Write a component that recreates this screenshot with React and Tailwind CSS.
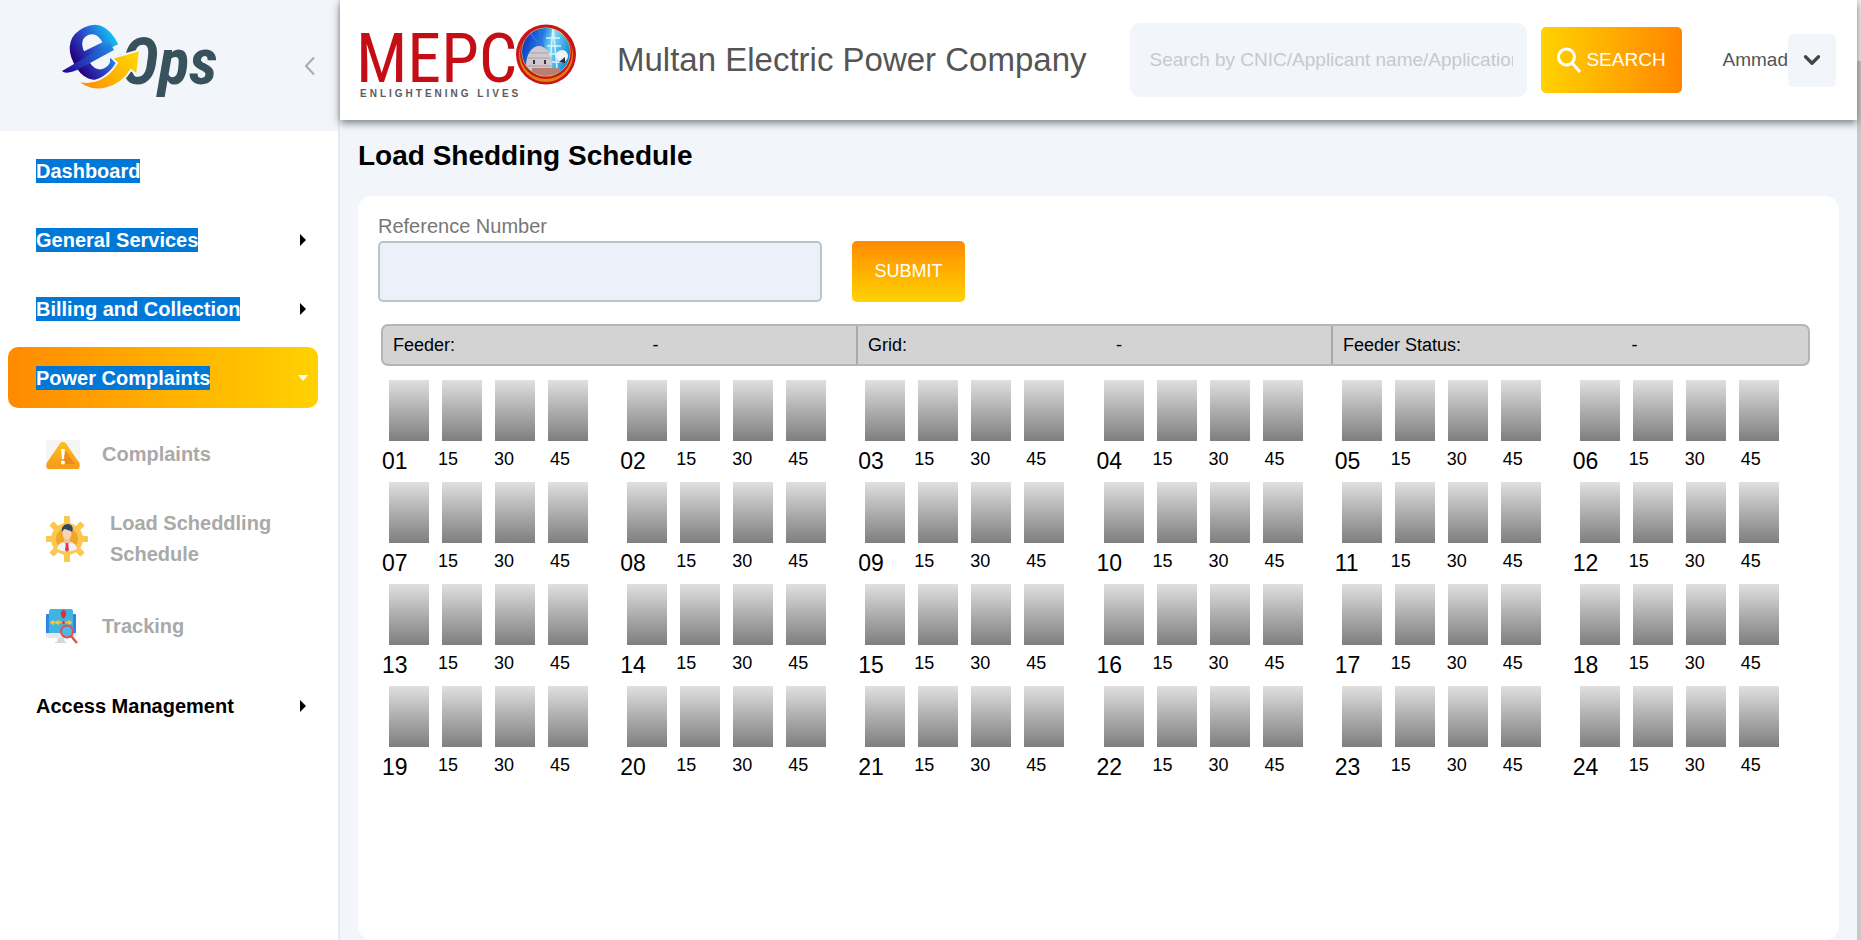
import { ChevronDown } from "lucide-react";

const HOURS = Array.from({ length: 24 }, (_, i) => String(i + 1).padStart(2, "0"));
const QUARTERS = ["15", "30", "45"];
const STATUS = ["Feeder:", "Grid:", "Feeder Status:"];

function EOpsLogo() {
  return (
    <svg width="166" height="86" viewBox="56 18 166 86" role="img" aria-label="eOps" className="shrink-0 overflow-visible">
      <defs>
        <linearGradient id="eBlue" x1="0" y1="0.6" x2="1" y2="0.4">
          <stop offset="0.1" stopColor="#25007f" />
          <stop offset="0.5" stopColor="#2b4fcf" />
          <stop offset="0.9" stopColor="#16bdf0" />
        </linearGradient>
        <linearGradient id="tail" gradientUnits="userSpaceOnUse" x1="62" y1="72" x2="110" y2="46">
          <stop offset="0" stopColor="#25009a" />
          <stop offset="1" stopColor="#1f86df" />
        </linearGradient>
        <linearGradient id="arrow" gradientUnits="userSpaceOnUse" x1="80" y1="88" x2="138" y2="54">
          <stop offset="0" stopColor="#ff8a00" />
          <stop offset="1" stopColor="#ffd800" />
        </linearGradient>
      </defs>
      <text x="121" y="84" fontSize="64" fontWeight="700" fontStyle="italic" fill="#37515d" fontFamily="'Roboto Condensed', Roboto, sans-serif">Ops</text>
      <text x="67" y="79" fontSize="100" fontWeight="700" fill="url(#eBlue)" transform="rotate(-26 95 52)" fontFamily="'Liberation Sans', sans-serif">e</text>
      <path d="M62 71 L110 43 L114 50 L77 70 Q65 75 62 71Z" fill="url(#tail)" />
      <path d="M76 80 C92 86 108 78 117 63 L112 58 L140 50 L137 75 L131 70 C120 88 94 98 76 80Z" fill="url(#arrow)" stroke="#f2f6fb" strokeWidth="2" />
    </svg>
  );
}

function MepcoLogo() {
  return (
    <svg width="218" height="80" viewBox="359 20 218 80" role="img" aria-label="MEPCO Enlightening Lives" className="shrink-0 overflow-visible">
      <defs>
        <linearGradient id="sky" x1="0" y1="0" x2="1" y2="0.3">
          <stop offset="0" stopColor="#0a17b4" />
          <stop offset="0.45" stopColor="#1c7fe0" />
          <stop offset="0.65" stopColor="#7fd6f5" />
          <stop offset="1" stopColor="#1590dc" />
        </linearGradient>
        <clipPath id="disc"><circle cx="546" cy="52" r="24" /></clipPath>
      </defs>
      <text x="356" y="82" fontSize="68" fill="#c40d14" fontFamily="'Roboto Condensed', 'Liberation Sans', sans-serif">MEPC</text>
      <circle cx="546" cy="54.500" r="31" fill="#fff" />
      <circle cx="546" cy="54.500" r="30" fill="#c8161a" />
      <circle cx="546" cy="55" r="27" fill="#e0820f" />
      <circle cx="546" cy="53" r="26" fill="#c8161a" />
      <circle cx="546" cy="52" r="24.500" fill="#f4d24a" />
      <g clipPath="url(#disc)">
        <rect x="520" y="26" width="52" height="52" fill="url(#sky)" />
        <path d="M528 30l20 26M538 26l8 30" stroke="#3d6be8" strokeWidth="1.500" />
        <path d="M553 26l-4 52M553 26l5 52M546 38h14M547 46h14M545 54h17M548 62h14" stroke="#d6f4ff" strokeWidth="1.500" fill="none" />
        <path d="M526 66c0-12 6-20 13-20s13 8 13 20v14h-26z" fill="#cfc8cc" />
        <path d="M528 58h22M530 53h18M527 66h24" stroke="#a9a0a8" />
        <path d="M534 60v4M545 60v4" stroke="#3a3340" strokeWidth="2" />
        <path d="M532 68h28v12h-28z" fill="#b97f72" />
        <circle cx="562" cy="56" r="6" fill="#eef4f8" />
        <path d="M559 62l6-5v6z" fill="#2c3138" />
      </g>
      <text x="360" y="97" fontSize="10" fontWeight="700" fill="#5b5b5d" letterSpacing="3" fontFamily="'Liberation Sans', sans-serif">ENLIGHTENING LIVES</text>
    </svg>
  );
}

function WarningIcon() {
  return (
    <svg width="34" height="30" viewBox="0 0 34 30" aria-hidden="true" className="shrink-0">
      <defs>
        <linearGradient id="warn" x1="0" y1="0" x2="0" y2="1">
          <stop offset="0" stopColor="#ffc21c" />
          <stop offset="1" stopColor="#f79a1b" />
        </linearGradient>
      </defs>
      <rect width="34" height="30" fill="#f5f5f5" />
      <path d="M14 4q3-4 6 0l13 20q2 5-3 5H4q-5 0-3-5z" fill="#f6a313" />
      <path d="M14 3.500q3-3.500 6 0l13 19q2 5-3 5H4q-5 0-3-5z" fill="url(#warn)" />
      <path d="M19 10l10 14h-9l-3-2z" fill="#e5761d" opacity="0.6" />
      <path d="M15 9h4l-1 10h-2z" fill="#fff" />
      <circle cx="17" cy="22.500" r="2" fill="#fff" />
    </svg>
  );
}

function GearPersonIcon() {
  return (
    <svg width="42" height="46" viewBox="0 0 42 46" aria-hidden="true" className="shrink-0">
      <g fill="#fdc64d">
        <rect x="18" y="0" width="6" height="46" rx="1" />
        <rect x="0" y="20" width="42" height="6" rx="1" />
        <rect x="18" y="1" width="6" height="44" rx="1" transform="rotate(45 21 23)" />
        <rect x="18" y="1" width="6" height="44" rx="1" transform="rotate(-45 21 23)" />
        <circle cx="21" cy="23" r="16" />
      </g>
      <circle cx="21" cy="23" r="11" fill="#f0a52b" />
      <path d="M11 33q1-6 7-7h6q6 1 7 7-10 5-20 0z" fill="#eef1fb" />
      <path d="M18 22h6v5l-3 3-3-3z" fill="#f2c09b" />
      <ellipse cx="21" cy="17.500" rx="4.500" ry="6" fill="#fbd3ae" />
      <path d="M16 16c-1-5 2-8 6-8 4 0 6 4 4 8-2-2-6-2-7-3-1 0-2 1-3 3z" fill="#2d4864" />
      <path d="M20 27h2l1 7-2 2-2-2z" fill="#e0354a" />
    </svg>
  );
}

function TrackingIcon() {
  return (
    <svg width="32" height="36" viewBox="0 0 32 36" aria-hidden="true" className="shrink-0">
      <rect x="0" y="6" width="30" height="20" rx="1" fill="#2d86e0" />
      <path d="M0 25h30v3q0 2-2 2H2q-2 0-2-2z" fill="#e6e7ea" />
      <path d="M12 30h6l1 4h2v1H9v-1h2z" fill="#d4d6da" />
      <path d="M5 1h20q2 0 2 3v21H3V4q0-3 2-3z" fill="#3fb4e4" />
      <path d="M5 14.500h21" stroke="#f6c945" strokeWidth="1.500" />
      <path d="M8 12.500l-3 2 3 2M13 12.500l-3 2 3 2M22 12.500l3 2-3 2" fill="none" stroke="#f6c945" strokeWidth="1.500" />
      <path d="M17.500 11c-5-5-2-9 0-9s5 4 0 9z" fill="#d8343b" />
      <circle cx="17.500" cy="14.500" r="1.500" fill="#d8343b" />
      <path d="M25 28l6 7" stroke="#e2504f" strokeWidth="2.500" />
      <circle cx="21" cy="23.500" r="6" fill="#4fb6e8" stroke="#e2504f" strokeWidth="2" />
    </svg>
  );
}

function NavItem({ label, arrow, selected, active }) {
  return (
    <button
      type="button"
      aria-expanded={arrow ? Boolean(active) : undefined}
      className={`flex h-[61px] w-full items-center justify-between rounded-[10px] pl-7 pr-2.5 text-left ${active ? "bg-linear-to-r from-[#ff8a00] to-[#ffd200]" : ""}`}
    >
      <span className={`text-[20px] leading-6 font-bold ${selected ? "bg-[#0078d7] text-white" : "text-black"}`}>{label}</span>
      {arrow && (
        <svg width="10" height="12" viewBox="0 0 10 12" aria-hidden="true">
          {active ? <path d="M0 3h10l-5 6z" fill="#fff" /> : <path d="M2 0v12l6-6z" fill="#000" />}
        </svg>
      )}
    </button>
  );
}

function SubItem({ icon, children, className }) {
  return (
    <a href="#" className={`flex items-center text-[20px] leading-[31px] font-bold text-[#a9a9a9] ${className}`}>
      {icon}
      <span>{children}</span>
    </a>
  );
}

function Sidebar() {
  return (
    <aside className="w-[340px] shrink-0 border-r-2 border-[#e6eaf0] bg-white">
      <div className="flex h-[131px] items-start justify-between bg-[#f2f6fb] pt-[18px] pr-[22px] pl-14">
        <EOpsLogo />
        <button type="button" aria-label="Collapse menu" className="mt-[38px]">
          <svg width="12" height="20" viewBox="0 0 12 20" fill="none" stroke="#aaa" strokeWidth="2" aria-hidden="true">
            <path d="M10 1.500L2 10l8 8.500" />
          </svg>
        </button>
      </div>
      <nav className="flex flex-col gap-2 pt-[9px] pr-5 pl-2">
        <NavItem label="Dashboard" selected />
        <NavItem label="General Services" arrow selected />
        <NavItem label="Billing and Collection" arrow selected />
        <NavItem label="Power Complaints" arrow selected active />
        <div className="flex flex-col py-[23px] pl-[38px]">
          <SubItem icon={<WarningIcon />} className="gap-[22px]">Complaints</SubItem>
          <SubItem icon={<GearPersonIcon />} className="mt-[38px] gap-[22px]">Load Scheddling Schedule</SubItem>
          <SubItem icon={<TrackingIcon />} className="mt-[38px] gap-6">Tracking</SubItem>
        </div>
        <NavItem label="Access Management" arrow />
      </nav>
    </aside>
  );
}

function Header() {
  return (
    <header className="relative flex h-[120px] items-center bg-white pr-[21px] pl-[19px] shadow-[0_3px_8px_rgba(0,0,0,0.5)]">
      <MepcoLogo />
      <p className="ml-10 text-[33px] leading-10 whitespace-nowrap text-[#555]">Multan Electric Power Company</p>
      <form className="ml-auto flex items-center gap-3.5" onSubmit={(e) => e.preventDefault()}>
        <input
          type="text"
          aria-label="Search"
          placeholder="Search by CNIC/Applicant name/Application"
          className="h-[74px] w-[397px] rounded-[10px] bg-[#f2f6fb] pr-3.5 pl-5 text-[19px] text-[#555] placeholder:text-[#c5c9d0]"
        />
        <button type="submit" className="flex h-[66px] w-[141px] items-center justify-center gap-1 rounded-[5px] bg-linear-to-r from-[#ffd200] to-[#ff8500] text-[19px] text-white">
          <svg width="26" height="28" viewBox="0 0 26 28" fill="none" stroke="#fff" strokeWidth="3" aria-hidden="true">
            <circle cx="10.500" cy="11" r="8" />
            <path d="M16 17l8 9" />
          </svg>
          SEARCH
        </button>
      </form>
      <div className="ml-[41px] flex items-center text-[19px] text-[#555]">
        <span>Ammad</span>
        <button type="button" aria-label="User menu" className="flex h-[53px] w-12 items-center justify-center rounded-[5px] bg-[#f2f6fb]">
          <ChevronDown size={26} strokeWidth={3} color="#444" />
        </button>
      </div>
    </header>
  );
}

function Hour({ hour }) {
  return (
    <div className="pb-3">
      <div className="flex gap-[13px] pl-2">
        {["00", ...QUARTERS].map((q) => (
          <div key={q} className="h-[61px] w-10 bg-linear-to-b from-[#e0e0e0] to-[#7f7f7f]" />
        ))}
      </div>
      <div className="flex h-[29px] items-start pl-px">
        <span className="w-14 text-[23px] leading-10">{hour}</span>
        {QUARTERS.map((q) => (
          <span key={q} className="w-14 text-[18px] leading-9">{q}</span>
        ))}
      </div>
    </div>
  );
}

export default function App() {
  return (
    <div className="flex min-h-screen bg-[#f2f6fb] font-['Liberation_Sans',Arial,sans-serif] text-black">
      <Sidebar />
      <div className="flex min-w-0 flex-1 flex-col">
        <Header />
        <main className="flex flex-1 flex-col px-[18px]">
          <h1 className="pt-[18px] text-[28px] leading-9 font-bold">Load Shedding Schedule</h1>
          <section className="mt-[22px] flex-1 rounded-[14px] bg-white pr-[29px] pl-5">
            <form className="flex items-end gap-[30px] pt-4" onSubmit={(e) => e.preventDefault()}>
              <div className="flex flex-col">
                <label htmlFor="ref" className="text-[20px] leading-[29px] text-[#777]">Reference Number</label>
                <input id="ref" type="text" className="h-[61px] w-[444px] rounded-[5px] border-2 border-[#bfc3c9] bg-[#ecf0f9] px-4 text-[19px]" />
              </div>
              <button type="submit" className="h-[61px] w-[113px] rounded-[5px] bg-linear-to-b from-[#ff8a00] to-[#ffd200] text-[18px] text-white">SUBMIT</button>
            </form>
            <div className="pl-[3px]">
              <dl className="mt-[22px] grid grid-cols-3 divide-x-2 divide-[#a9a9a9] rounded-[7px] border-2 border-[#b5b5b5] bg-[#d3d3d3] text-[18px] leading-[38px]">
                {STATUS.map((s) => (
                  <div key={s} className="flex pl-2.5">
                    <dt>{s}</dt>
                    <dd className="flex-1 text-center">-</dd>
                  </div>
                ))}
              </dl>
              <div className="grid grid-cols-6 pt-3.5">
                {HOURS.map((h) => (
                  <Hour key={h} hour={h} />
                ))}
              </div>
            </div>
          </section>
        </main>
      </div>
      <div aria-hidden="true" className="w-1 shrink-0 bg-[#f1f1f1] pt-[61px]">
        <div className="h-full bg-[#c9c9c9]" />
      </div>
    </div>
  );
}
